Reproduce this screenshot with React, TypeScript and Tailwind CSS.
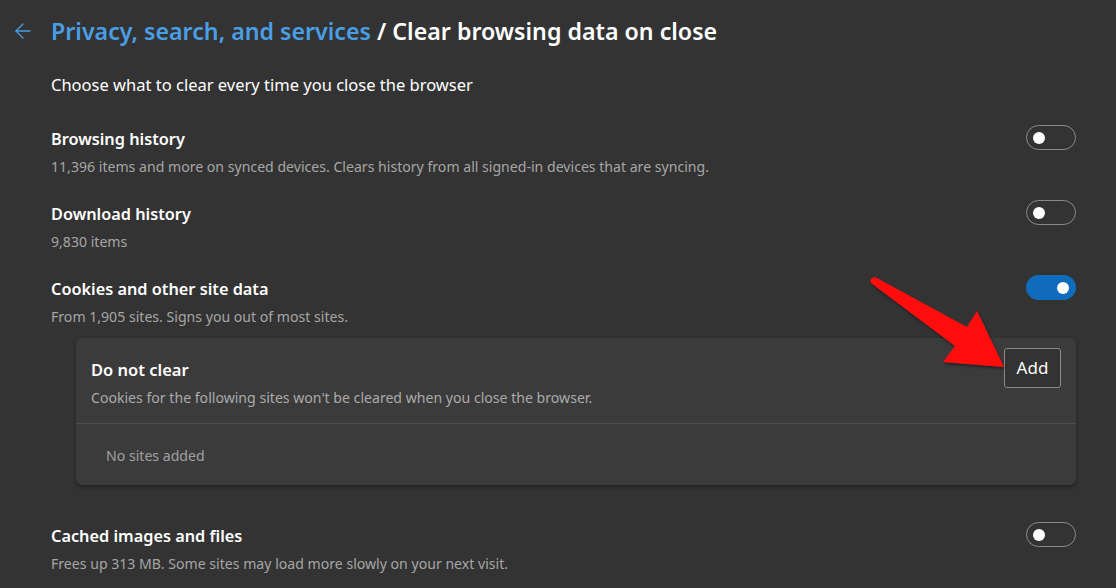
import { ArrowLeft } from "lucide-react";

type RowProps = {
  title: string;
  desc: string;
  on?: boolean;
};

function Toggle({ on }: { on?: boolean }) {
  if (on) {
    return (
      <div className="-mt-[2px] flex h-[25px] w-[50px] shrink-0 items-center justify-end rounded-full bg-[#0f6cbd] pr-[7px]">
        <div className="h-[12px] w-[12px] rounded-full bg-white" />
      </div>
    );
  }
  return (
    <div className="-mt-[2px] flex h-[25px] w-[50px] shrink-0 items-center rounded-full border border-[#8a8a8a] pl-[6px]">
      <div className="h-[12px] w-[12px] rounded-full bg-white" />
    </div>
  );
}

function Row({ title, desc, on }: RowProps) {
  return (
    <div className="flex items-start justify-between pr-[40px]">
      <div className="flex flex-col">
        <div className="text-[16.3px] font-semibold leading-[24px] text-white">{title}</div>
        <div className="mt-[6px] text-[14.1px] leading-[20px] text-[#a6a6a6]">{desc}</div>
      </div>
      <Toggle on={on} />
    </div>
  );
}

export default function App() {
  return (
    <div
      className="relative h-[588px] w-[1116px] overflow-hidden bg-[#333333]"
      style={{ fontFamily: '"Segoe UI", "Noto Sans", sans-serif' }}
    >
      {/* Header */}
      <div className="flex items-center pt-[14px] pl-[11px]">
        <ArrowLeft className="h-[24px] w-[24px] text-[#4a9ee4]" strokeWidth={1.3} />
        <h1 className="ml-[16px] text-[23.2px] font-semibold leading-[34px] text-white">
          <span className="text-[#4a9ee4]">Privacy, search, and services</span> / Clear browsing data on close
        </h1>
      </div>

      <div className="pl-[51px]">
        <p className="mt-[25px] text-[16.5px] leading-[24px] text-white">
          Choose what to clear every time you close the browser
        </p>

        <div className="mt-[30px] flex flex-col gap-[25px]">
          <Row
            title="Browsing history"
            desc="11,396 items and more on synced devices. Clears history from all signed-in devices that are syncing."
          />
          <Row title="Download history" desc="9,830 items" />
          <Row title="Cookies and other site data" desc="From 1,905 sites. Signs you out of most sites." on />
        </div>

        {/* Do not clear card */}
        <div className="mt-[11px] ml-[25px] mr-[40px] rounded-[6px] bg-[#3b3b3b] shadow-[0_2px_4px_rgba(0,0,0,0.35)]">
          <div className="flex items-start justify-between border-b border-[#4e4e4e] pl-[15px] pr-[15px] pt-[10px] pb-[15px]">
            <div className="flex flex-col pt-[10px]">
              <div className="text-[16.5px] font-semibold leading-[24px] text-white">Do not clear</div>
              <div className="mt-[6px] text-[14.1px] leading-[20px] text-[#aaaaaa]">
                Cookies for the following sites won't be cleared when you close the browser.
              </div>
            </div>
            <button className="h-[40px] w-[57px] rounded-[3px] border border-[#8a8a8a] bg-[#333333] text-[17px] text-white">
              Add
            </button>
          </div>
          <div className="pt-[21px] pb-[18px] pl-[30px] text-[14.1px] leading-[22px] text-[#a0a0a0]">No sites added</div>
        </div>

        <div className="mt-[39px]">
          <Row
            title="Cached images and files"
            desc="Frees up 313 MB. Some sites may load more slowly on your next visit."
          />
        </div>
      </div>

      {/* Red arrow annotation */}
      <svg
        className="pointer-events-none absolute left-0 top-0"
        width="1116"
        height="588"
        viewBox="0 0 1116 588"
      >
        <defs>
          <filter id="sh" x="-20%" y="-20%" width="140%" height="140%">
            <feDropShadow dx="1" dy="2" stdDeviation="1.5" floodColor="#000" floodOpacity="0.45" />
          </filter>
        </defs>
        <path
          d="M871 283 Q869 278 875 277 L967 327 L977 311 L1004 367 L943 362 L955 346 Z"
          fill="#ff1010"
          filter="url(#sh)"
        />
      </svg>
    </div>
  );
}
